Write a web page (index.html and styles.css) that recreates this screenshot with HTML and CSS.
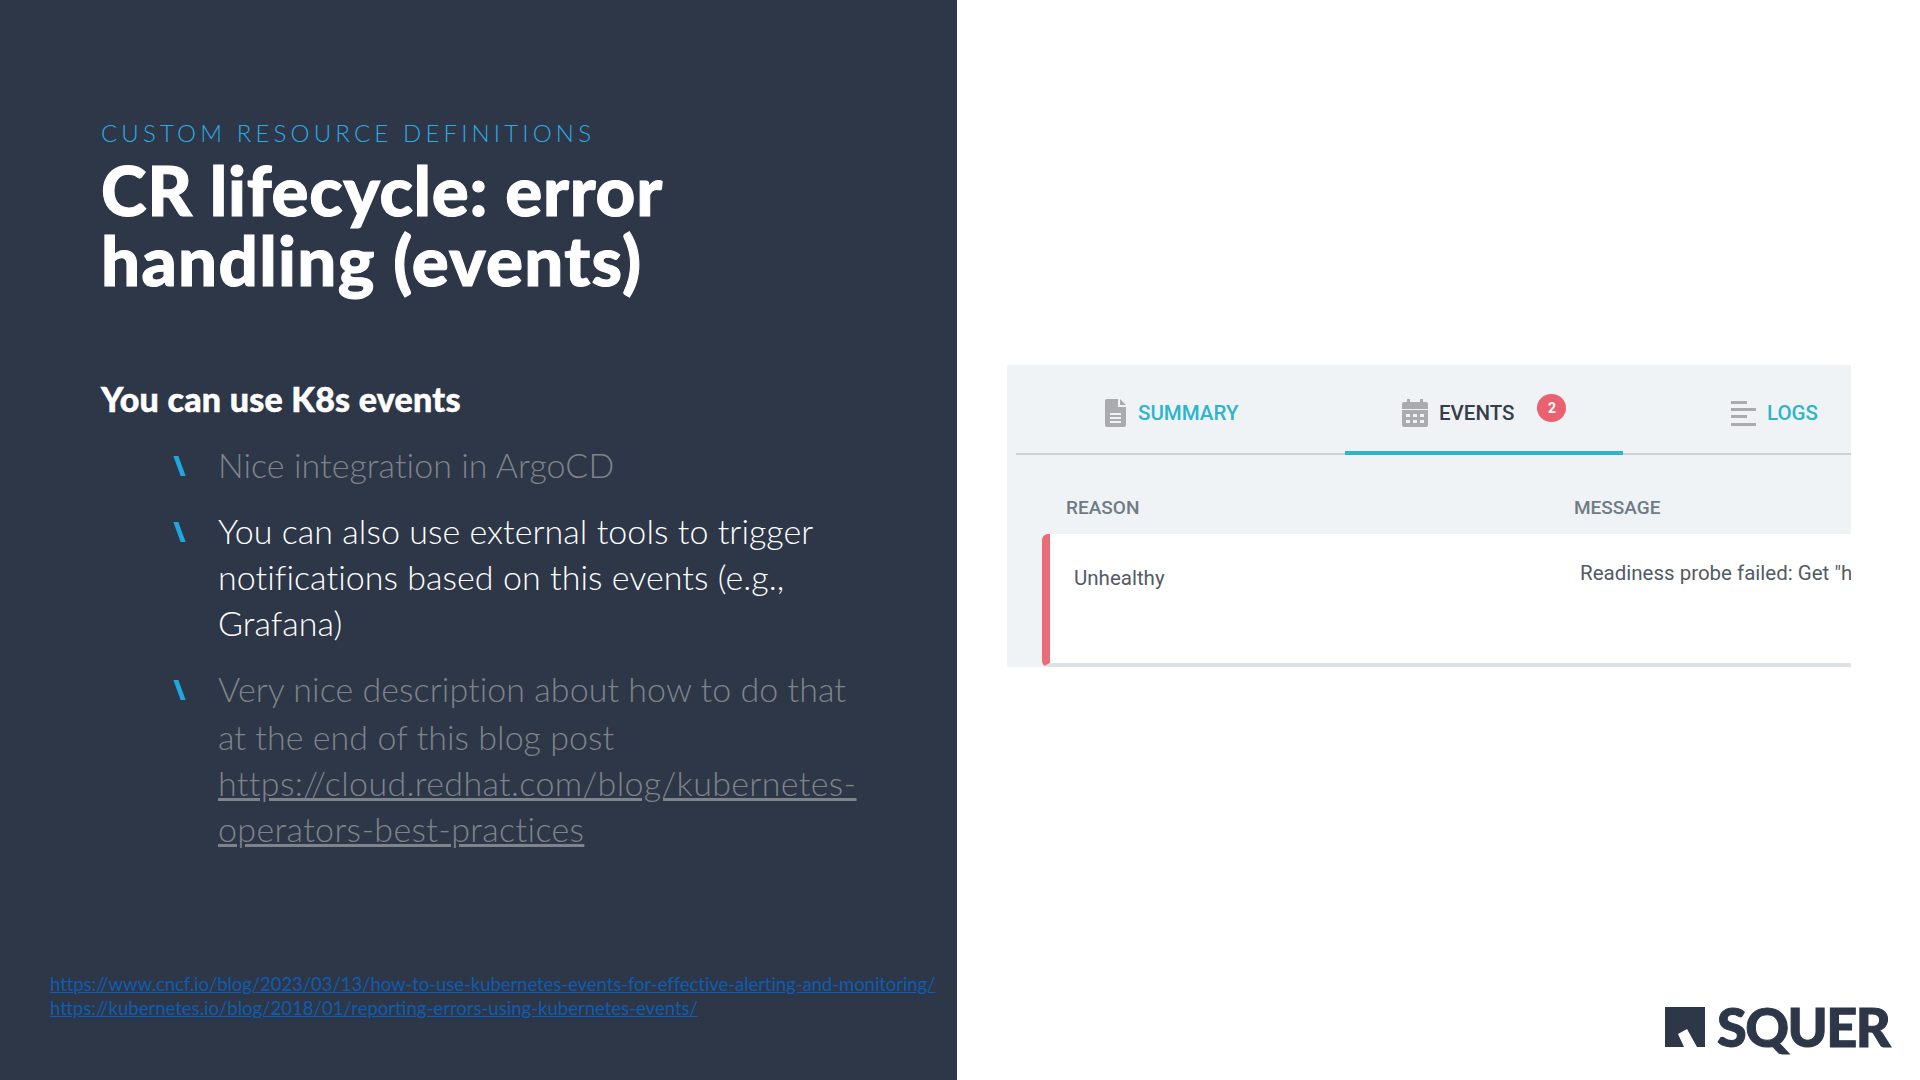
FILE: index.html
```html
<!DOCTYPE html>
<html lang="en">
<head>
<meta charset="utf-8">
<title>CR lifecycle: error handling (events)</title>
<link rel="stylesheet" href="styles.css">
</head>
<body>
<main class="slide">
  <section class="left">
    <div class="content">
      <p class="eyebrow">CUSTOM RESOURCE DEFINITIONS</p>
      <h1 class="title"><span class="title-line">CR lifecycle: error</span><span class="title-line wide">handling (events)</span></h1>
      <h2 class="lead">You can use K8s events</h2>
      <ul class="points">
        <li class="point muted"><span class="mark"></span><p>Nice integration in ArgoCD</p></li>
        <li class="point"><span class="mark"></span><p>You can also use external tools to trigger<br>notifications based on this events (e.g.,<br>Grafana)</p></li>
        <li class="point muted"><span class="mark"></span><p><span class="spaced">Very nice description about how to do that</span>at the end of this blog post<br><a href="#">https://cloud.redhat.com/blog/kubernetes-<br>operators-best-practices</a></p></li>
      </ul>
    </div>
    <div class="notes">
      <a class="note-long" href="#">https://www.cncf.io/blog/2023/03/13/how-to-use-kubernetes-events-for-effective-alerting-and-monitoring/</a>
      <a href="#">https://kubernetes.io/blog/2018/01/reporting-errors-using-kubernetes-events/</a>
    </div>
  </section>
  <section class="right">
    <div class="card">
      <div class="tabs">
        <div class="tab tab-summary">
          <svg class="icon-doc" viewBox="0 0 21 28"><path fill="#a9abae" fill-rule="evenodd" d="M2 0h11v8h8v18a2 2 0 0 1-2 2H2a2 2 0 0 1-2-2V2a2 2 0 0 1 2-2zM5 14v2h11v-2zM5 18v2h11v-2zM5 22v2h11v-2z"/><path fill="#a9abae" d="M15 0l6 6h-6z"/></svg>
          <span class="link">SUMMARY</span>
        </div>
        <div class="tab tab-events">
          <svg class="icon-cal" viewBox="0 0 26 28"><path fill="#a9abae" fill-rule="evenodd" d="M5 0h3v3h10V0h3v3h3a2 2 0 0 1 2 2v5H0V5a2 2 0 0 1 2-2h3zM0 11h26v15a2 2 0 0 1-2 2H2a2 2 0 0 1-2-2zM4 15v3h4v-3zM11 15v3h4v-3zM18 15v3h4v-3zM4 21v3h4v-3zM11 21v3h4v-3zM18 21v3h4v-3z"/></svg>
          <span class="active-label">EVENTS</span>
          <span class="badge">2</span>
        </div>
        <div class="tab tab-logs">
          <svg class="icon-logs" viewBox="0 0 25 25"><path fill="#a9abae" d="M0 0h16v3H0zM0 7h25v3H0zM0 14h16v3H0zM0 22h25v3H0z"/></svg>
          <span class="link">LOGS</span>
        </div>
      </div>
      <div class="thead"><span>REASON</span><span>MESSAGE</span></div>
      <div class="row">
        <span class="reason">Unhealthy</span>
        <span class="message">Readiness probe failed: Get "h</span>
      </div>
    </div>
    <div class="logo">
      <svg class="logo-mark" viewBox="0 0 40 40"><path fill="#2d3748" d="M0 0h40v40H32L22 22l-9 5 6 13H0z"/></svg>
      <span class="logo-text">SQUER</span>
    </div>
  </section>
</main>
</body>
</html>
```
FILE: styles.css
```css
* { box-sizing: border-box; }
html, body { margin: 0; padding: 0; }
body { width: 1920px; height: 1080px; overflow: hidden; background: #fff; font-family: "Lato", sans-serif; }
p, h1, h2, ul { margin: 0; padding: 0; }
.slide { display: flex; width: 1920px; height: 1080px; }

.left { width: 957px; height: 1080px; background: #2d3748; display: flex; flex-direction: column; flex: none; }
.content { padding: 118px 0 0 101px; }
.eyebrow { font-weight: 300; font-size: 24px; line-height: 30px; letter-spacing: 4.15px; color: #2eaae4; }
.title { font-weight: 900; font-size: 69px; line-height: 70px; color: #fff; margin-top: 7px; -webkit-text-stroke: 1px #fff; }
.title-line { display: block; letter-spacing: 0.7px; }
.title-line.wide { letter-spacing: 1.3px; }
.lead { font-weight: 900; font-size: 34px; line-height: 40px; letter-spacing: 0.25px; color: #fff; margin-top: 84px; -webkit-text-stroke: 0.5px #fff; }
.points { list-style: none; margin-top: 23px; }
.point { display: flex; color: #fff; font-weight: 300; font-size: 34px; line-height: 46px; letter-spacing: 0.05px; margin-bottom: 20px; }
.point.muted { color: #7f838a; }
.point a { color: inherit; letter-spacing: 0.35px; }
.spaced { display: block; margin-bottom: 2px; }
.mark { flex: none; width: 5px; height: 20px; margin: 14px 36px 0 76px; background: #1ea7e0; transform: skewX(20deg); }

.notes { margin-top: auto; padding: 0 0 60px 50px; display: flex; flex-direction: column; font-size: 18.55px; line-height: 24px; white-space: nowrap; }
.notes a { color: #0f5cb0; }
.notes .note-long { letter-spacing: -0.07px; }

.right { flex: 1; height: 1080px; display: flex; flex-direction: column; padding-top: 365px; }
.card { width: 844px; height: 302px; margin-left: 50px; background: #eff3f6; font-family: "Roboto", sans-serif; overflow: hidden; }
.tabs { display: flex; height: 90px; margin-left: 9px; border-bottom: 2px solid #cdd1d5; }
.tab { display: flex; align-items: center; height: 90px; padding-top: 6px; font-weight: 500; font-size: 20.5px; }
.tab-summary { width: 329px; padding-left: 89px; }
.tab-events { width: 278px; padding-left: 57px; box-shadow: inset 0 -4px 0 #2cb5cb; }
.tab-logs { padding-left: 108px; }
.icon-doc { width: 21px; height: 28px; margin-right: 12px; }
.icon-cal { width: 26px; height: 28px; margin-right: 11px; }
.icon-logs { width: 25px; height: 25px; margin-right: 11px; }
.link { color: #2cb5cb; }
.active-label { color: #353d49; }
.badge { width: 29px; height: 28px; margin: -10px 0 0 23px; border-radius: 50%; background: #ea6170; color: #fff; font-size: 14px; font-weight: 700; line-height: 28px; text-align: center; }
.thead { display: grid; grid-template-columns: 508px 1fr; padding-left: 59px; height: 79px; align-items: center; padding-top: 26px; font-weight: 500; font-size: 19px; color: #6f7c87; }
.row { display: grid; grid-template-columns: 506px 1fr; height: 133px; margin-left: 35px; padding-left: 24px; background: #fff; border-left: 8px solid #e96d76; border-bottom: 4px solid #dfe2e4; border-radius: 6px 0 0 6px; font-size: 20.5px; color: #525b66; white-space: nowrap; overflow: hidden; }
.reason { padding-top: 32px; }
.message { padding-top: 27px; overflow: hidden; }

.logo { margin-top: auto; margin-left: 708px; margin-bottom: 33px; display: flex; align-items: center; }
.logo-mark { width: 40px; height: 40px; flex: none; }
.logo-text { font-weight: 900; font-size: 54px; line-height: 40px; letter-spacing: -1.5px; color: #2d3748; margin-left: 12px; -webkit-text-stroke: 1px #2d3748; }
```
